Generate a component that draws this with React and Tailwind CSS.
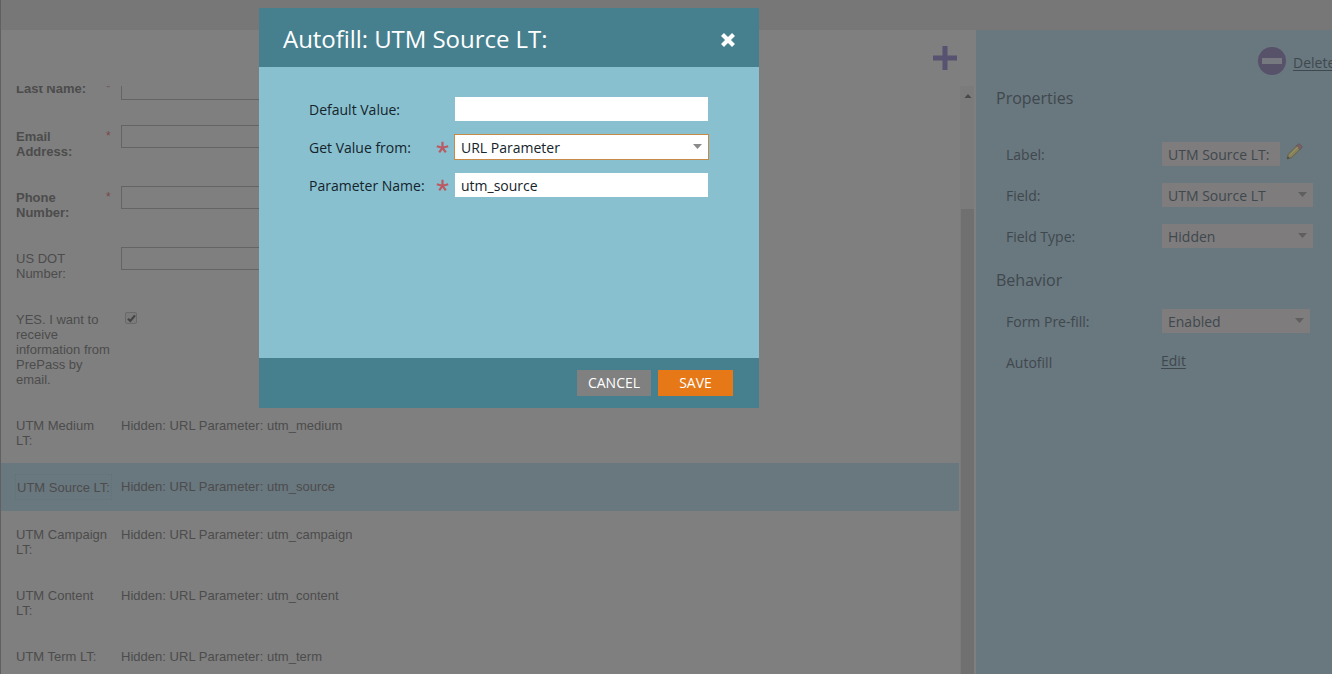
import clsx from "clsx";

const formRows = [
  { label: "Last Name:", type: "input", bold: true, height: "h-12" },
  { label: "Email Address:", type: "input", bold: true, required: true, height: "h-[61px]" },
  { label: "Phone Number:", type: "input", bold: true, required: true, height: "h-[61px]" },
  { label: "US DOT Number:", type: "input", height: "h-[61px]" },
  { label: "YES. I want to receive information from PrePass by email.", type: "checkbox", height: "h-[106px]" },
  { label: "UTM Medium LT:", value: "utm_medium", height: "h-[61px]" },
  { label: "UTM Source LT:", value: "utm_source", height: "h-12", selected: true },
  { label: "UTM Campaign LT:", value: "utm_campaign", height: "h-[61px]" },
  { label: "UTM Content LT:", value: "utm_content", height: "h-[61px]" },
  { label: "UTM Term LT:", value: "utm_term", height: "h-12" },
];

function Caret({ className }) {
  return (
    <svg width="9" height="5" viewBox="0 0 9 5" className={className}>
      <path d="M0 0h9L4.5 5z" fill="currentColor" />
    </svg>
  );
}

function FormRow({ row }) {
  return (
    <div
      className={clsx(
        "flex shrink-0 pl-[15px] pt-4 leading-[15px]",
        row.height,
        row.selected && "bg-[#69777f]"
      )}
    >
      <div
        className={clsx(
          "shrink-0",
          row.bold ? "w-[90px] font-bold" : "w-[96px]",
          row.selected && "-ml-px -mt-[5px] h-[26px] w-[97px] whitespace-nowrap border border-dotted border-[#627078] pl-px pt-[5px]"
        )}
      >
        {row.label}
      </div>
      <div
        className={clsx(
          "w-[9px] shrink-0 text-[12px]",
          row.bold && "mr-[6px]",
          row.required ? "text-[#79484b]" : "text-[#6a5052]"
        )}
      >
        {row.bold && "*"}
      </div>
      {row.type === "input" && <div className="-mt-1 h-[23px] w-[300px] border border-[#646464]" />}
      {row.type === "checkbox" && (
        <div className="ml-[4px] flex size-3 items-center justify-center rounded-[2px] border border-[#696969] bg-[#7b7b7b]">
          <svg width="9" height="9" viewBox="0 0 9 9">
            <path d="M1 4.8 3.3 7 8 1.4" fill="none" stroke="#444444" strokeWidth="2.2" />
          </svg>
        </div>
      )}
      {row.value && (
        <div className="whitespace-nowrap tracking-[0.02px]">Hidden: URL Parameter: {row.value}</div>
      )}
    </div>
  );
}

function SelectBox({ value, className }) {
  return (
    <div className={clsx("flex h-6 items-center justify-between bg-[#7e7c7d] pl-[6px] pr-[6px]", className)}>
      <span className="pt-[2px]">{value}</span>
      <Caret className="mb-px text-[#5f5f60]" />
    </div>
  );
}

function PropertyRow({ label, children }) {
  return (
    <div className="flex h-[41px] items-center pl-[10px]">
      <span className="w-[156px] shrink-0 pt-[2px]">{label}</span>
      {children}
    </div>
  );
}

function Pencil() {
  return (
    <svg width="17" height="17" viewBox="0 0 17 17">
      <path d="M1 16 2.3 11.2 11.6 1.8 15.2 5.2 5.6 14.7z" fill="#858159" stroke="#5f5b48" strokeWidth=".8" />
      <path d="M10.3 3 12 1.3Q13 .5 14 1.3L15.7 3Q16.5 4 15.7 5L14 6.6z" fill="#796064" stroke="#64545a" strokeWidth=".7" />
      <path d="M3.5 12.5 12 4" stroke="#98936d" />
      <path d="m1 16 .8-2.8 2 2z" fill="#494b4b" />
    </svg>
  );
}

function Properties() {
  return (
    <aside className="w-[356px] shrink-0 overflow-hidden bg-[#69777f] pl-5 text-sm text-[#3f484d]">
      <div className="flex h-[49px] items-end pl-[262px]">
        <svg width="28" height="28" viewBox="0 0 28 28" className="mb-[4px] shrink-0">
          <circle cx="14" cy="14" r="14" fill="#57516a" />
          <path d="M4 11h20v6H4z" fill="#777980" />
        </svg>
        <span className="mb-[6px] ml-[7px] underline underline-offset-2">Delete</span>
      </div>
      <h2 className="mt-[7px] h-[47px] text-base">Properties</h2>
      <PropertyRow label="Label:">
        <div className="h-6 w-[118px] bg-[#7e7c7d] pl-[6px] pt-[3px]">UTM Source LT:</div>
        <div className="mb-[5px] ml-[6px]">
          <Pencil />
        </div>
      </PropertyRow>
      <PropertyRow label="Field:">
        <SelectBox value="UTM Source LT" className="w-[151px]" />
      </PropertyRow>
      <PropertyRow label="Field Type:">
        <SelectBox value="Hidden" className="w-[151px]" />
      </PropertyRow>
      <h2 className="mt-3 h-8 text-base">Behavior</h2>
      <PropertyRow label="Form Pre-fill:">
        <SelectBox value="Enabled" className="w-[148px]" />
      </PropertyRow>
      <PropertyRow label="Autofill">
        <span className="-ml-px mb-px underline underline-offset-2">Edit</span>
      </PropertyRow>
    </aside>
  );
}

function ModalField({ label, required, children }) {
  return (
    <div className="flex h-[38px] items-center">
      <span className="w-[126px] pt-[2px]">{label}</span>
      <span className="flex w-5 items-center">
        {required && (
          <svg width="13" height="13" viewBox="0 0 13 13" className="ml-px">
            <path d="M6.5 6.8V.8M6.5 6.8.8 5.2M6.5 6.8 12.2 5.2M6.5 6.8 3.2 11.4M6.5 6.8 9.8 11.4" stroke="#bb5a62" strokeWidth="2.2" />
          </svg>
        )}
      </span>
      {children}
    </div>
  );
}

function AutofillModal() {
  return (
    <div className="absolute left-[259px] top-2 flex h-[400px] w-[500px] flex-col bg-[#88c0d0] text-sm text-[#14242a]">
      <div className="flex h-[59px] items-center justify-between bg-[#46808f] pl-6 pr-[23px] text-white">
        <h1 className="pt-[3px] text-2xl tracking-[-0.05px]">Autofill: UTM Source LT:</h1>
        <svg width="16" height="16" viewBox="0 0 16 16" className="mt-[5px]">
          <path d="m2.5 2.5 11 11M13.5 2.5l-11 11" stroke="white" strokeWidth="4.2" />
        </svg>
      </div>
      <div className="flex-1 pl-[50px] pt-[23px]">
        <ModalField label="Default Value:">
          <div className="h-6 w-[253px] bg-white" />
        </ModalField>
        <ModalField label="Get Value from:" required>
          <div className="-ml-px flex h-[26px] w-[255px] items-center justify-between border border-[#c98a48] bg-white pl-[6px] pr-[6px]">
            <span className="pt-[2px]">URL Parameter</span>
            <Caret className="mb-px text-[#8b8b8b]" />
          </div>
        </ModalField>
        <ModalField label="Parameter Name:" required>
          <div className="h-6 w-[253px] bg-white pl-[6px] pt-[3px]">utm_source</div>
        </ModalField>
      </div>
      <div className="flex h-[50px] items-center justify-end gap-[7px] bg-[#46808f] pr-[26px] text-white">
        <button className="h-[26px] w-[74px] bg-[#808080]">CANCEL</button>
        <button className="h-[26px] w-[75px] bg-[#e67817]">SAVE</button>
      </div>
    </div>
  );
}

export default function App() {
  return (
    <div className="relative flex h-[674px] w-[1332px] flex-col overflow-hidden bg-[#7f7f7f] font-['Open_Sans',sans-serif]">
      <div className="h-[30px] shrink-0 border-l border-[#606060] bg-[#777777]" />
      <div className="flex min-h-0 flex-1 border-l border-[#606060]">
        <main className="flex w-[975px] shrink-0 flex-col">
          <div className="flex h-14 shrink-0 justify-end pr-[19px] pt-4">
            <svg width="24" height="24" viewBox="0 0 24 24">
              <path d="M12 0v24M0 12h24" stroke="#57526f" strokeWidth="5" />
            </svg>
          </div>
          <div className="flex min-h-0 flex-1">
            <div className="flex w-[958px] flex-col overflow-hidden font-['Liberation_Sans',sans-serif] text-[13px] text-[#4c4c4c]">
              <div className="-mt-[21px]">
                {formRows.map((row) => (
                  <FormRow key={row.label} row={row} />
                ))}
              </div>
            </div>
            <div className="ml-px flex w-[14px] flex-col bg-[#7b7b7b] pl-[1px]">
              <div className="flex h-[123px] shrink-0 justify-center pt-[8px]">
                <Caret className="h-[4px] w-[8px] rotate-180 text-[#4a4a4a]" />
              </div>
              <div className="w-[13px] flex-1 bg-[#707070]" />
            </div>
          </div>
        </main>
        <Properties />
      </div>
      <AutofillModal />
    </div>
  );
}
